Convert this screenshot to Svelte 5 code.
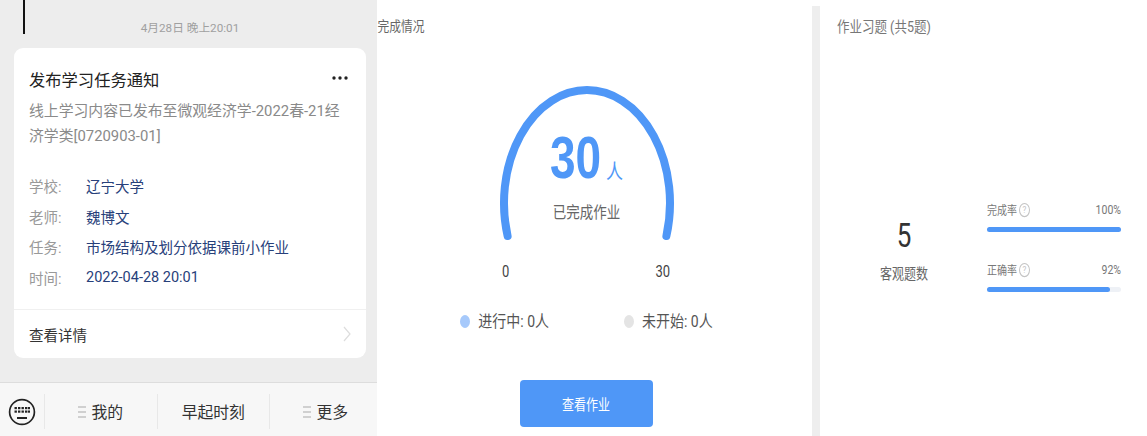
<script>
    const rows = [
        { label: "学校:", value: "辽宁大学" },
        { label: "老师:", value: "魏博文" },
        { label: "任务:", value: "市场结构及划分依据课前小作业" },
        { label: "时间:", value: "2022-04-28 20:01" }
    ];
    const menus = [
        { name: "我的", lines: true },
        { name: "早起时刻", lines: false },
        { name: "更多", lines: true }
    ];
    const rates = [
        { name: "完成率", text: "100%", pct: 100 },
        { name: "正确率", text: "92%", pct: 92 }
    ];
</script>

<div class="page">
    <section class="chat">
        <div class="cursor"></div>
        <div class="date">4月28日 晚上20:01</div>
        <div class="card">
            <div class="card-top">
                <div class="card-head">
                    <h2>发布学习任务通知</h2>
                    <svg class="more" width="18" height="6" viewBox="0 0 18 6">
                        <circle cx="3" cy="3" r="1.7" fill="#222" />
                        <circle cx="9" cy="3" r="1.7" fill="#222" />
                        <circle cx="15" cy="3" r="1.7" fill="#222" />
                    </svg>
                </div>
                <p class="desc">线上学习内容已发布至微观经济学-2022春-21经济学类[0720903-01]</p>
                <div class="rows">
                    {#each rows as row}
                        <div class="row">
                            <span class="label">{row.label}</span>
                            <span class="value">{row.value}</span>
                        </div>
                    {/each}
                </div>
            </div>
            <div class="detail">
                <span>查看详情</span>
                <svg width="8" height="16" viewBox="0 0 8 16">
                    <path d="M1 1l6 7-6 7" fill="none" stroke="#ddd" stroke-width="1.2" />
                </svg>
            </div>
        </div>
        <div class="menu">
            <div class="kb">
                <svg width="28" height="28" viewBox="0 0 28 28">
                    <circle cx="14" cy="14" r="12.4" fill="none" stroke="#222" stroke-width="1.7" />
                    <g fill="#222">
                        <rect x="6.5" y="9" width="2.4" height="2.2" />
                        <rect x="10" y="9" width="2.4" height="2.2" />
                        <rect x="13.5" y="9" width="2.4" height="2.2" />
                        <rect x="17" y="9" width="2.4" height="2.2" />
                        <rect x="20" y="9" width="2" height="2.2" />
                        <rect x="6.5" y="12.5" width="2.4" height="2.2" />
                        <rect x="10" y="12.5" width="2.4" height="2.2" />
                        <rect x="13.5" y="12.5" width="2.4" height="2.2" />
                        <rect x="17" y="12.5" width="2.4" height="2.2" />
                        <rect x="20" y="12.5" width="2" height="2.2" />
                        <rect x="9" y="19" width="10" height="2" />
                    </g>
                </svg>
            </div>
            {#each menus as m}
                <div class="menu-item">
                    {#if m.lines}<i class="lines"></i>{/if}
                    <span>{m.name}</span>
                </div>
            {/each}
        </div>
    </section>

    <section class="status">
        <h3 class="stitle">完成情况</h3>
        <div class="gauge">
            <svg class="arc" width="180" height="160" viewBox="0 0 180 160">
                <path d="M10.600 154 A83 113 0 1 1 169.400 154" fill="none" stroke="#4f97f7" stroke-width="8" stroke-linecap="round" />
            </svg>
            <div class="num"><b>30</b><span>人</span></div>
            <div class="done">已完成作业</div>
        </div>
        <div class="ends"><span>0</span><span>30</span></div>
        <div class="legend">
            <div class="leg"><i class="dot blue"></i><span>进行中: 0人</span></div>
            <div class="leg"><i class="dot grey"></i><span>未开始: 0人</span></div>
        </div>
        <button class="view"><span>查看作业</span></button>
    </section>

    <div class="strip"></div>

    <section class="exercise">
        <h3 class="etitle">作业习题 (共5题)</h3>
        <div class="stats">
            <div class="count">
                <div class="five">5</div>
                <div class="cap">客观题数</div>
            </div>
            <div class="rates">
                {#each rates as r}
                    <div class="rate">
                        <div class="rate-top">
                            <span class="rname">{r.name}<i class="q">?</i></span>
                            <span class="rval">{r.text}</span>
                        </div>
                        <div class="track"><div class="fill" style="width:{r.pct}%"></div></div>
                    </div>
                {/each}
            </div>
        </div>
    </section>
</div>

<style>
    :global(body) {
        margin: 0;
        background: #fff;
    }
    .page {
        display: flex;
        width: 1147px;
        height: 436px;
        overflow: hidden;
        font-family: Roboto, "Noto Sans CJK SC", sans-serif;
    }
    h2, h3, p {
        margin: 0;
        font-weight: 400;
    }

    /* left: chat card */
    .chat {
        position: relative;
        width: 377px;
        flex: none;
        background: #ededed;
        display: flex;
        flex-direction: column;
    }
    .cursor {
        position: absolute;
        left: 23px;
        top: 0;
        width: 2px;
        height: 34px;
        background: #111;
    }
    .date {
        height: 48px;
        padding-top: 19px;
        padding-left: 3px;
        box-sizing: border-box;
        text-align: center;
        font-size: 11.700px;
        line-height: 18px;
        color: #a0a0a0;
    }
    .card {
        margin: 0 11px 0 14px;
        height: 310px;
        background: #fff;
        border-radius: 9px;
        display: flex;
        flex-direction: column;
    }
    .card-top {
        flex: 1;
        padding: 19px 15px 0;
    }
    .card-head {
        display: flex;
        justify-content: space-between;
        align-items: center;
        height: 24px;
    }
    .card-head h2 {
        font-size: 16.300px;
        color: #222;
    }
    .more {
        margin-right: 2px;
        margin-top: -2px;
    }
    .desc {
        margin-top: 8px;
        font-size: 14.850px;
        line-height: 24.500px;
        color: #8a8a8a;
    }
    .rows {
        margin-top: 22px;
    }
    .row {
        display: flex;
        height: 30.700px;
        align-items: center;
        font-size: 14.500px;
    }
    .label {
        width: 57px;
        color: #999;
    }
    .value {
        color: #27407a;
    }
    .detail {
        height: 48px;
        border-top: 1px solid #f0f0f0;
        padding: 0 15px;
        display: flex;
        justify-content: space-between;
        align-items: center;
        font-size: 14.500px;
        color: #333;
    }
    .menu {
        margin-top: auto;
        height: 54px;
        background: #f7f7f7;
        border-top: 1px solid #ddd;
        box-sizing: border-box;
        display: flex;
        align-items: center;
        padding-top: 4px;
    }
    .kb {
        width: 44px;
        flex: none;
        display: flex;
        padding-left: 8px;
        box-sizing: border-box;
    }
    .menu-item {
        width: 112.500px;
        height: 35px;
        flex: none;
        border-left: 1px solid #e8e8e8;
        box-sizing: border-box;
        display: flex;
        align-items: center;
        justify-content: center;
        gap: 5px;
        font-size: 15.800px;
        color: #333;
    }
    .lines {
        width: 8px;
        height: 8px;
        border-top: 2px solid #d0d0d0;
        border-bottom: 2px solid #d0d0d0;
        position: relative;
    }
    .lines::after {
        content: "";
        position: absolute;
        left: 0;
        right: 0;
        top: 3px;
        height: 2px;
        background: #d0d0d0;
    }

    /* middle: completion */
    .status {
        width: 435px;
        flex: none;
        box-sizing: border-box;
        padding-right: 17px;
        display: flex;
        flex-direction: column;
        align-items: center;
    }
    .stitle {
        align-self: flex-start;
        margin-top: 18px;
        font-size: 12px;
        line-height: 18px;
        color: #666;
        transform: scale(0.98, 1.1);
    }
    .gauge {
        position: relative;
        width: 180px;
        height: 160px;
        margin-top: 46px;
        margin-left: 1px;
        display: flex;
        flex-direction: column;
        align-items: center;
    }
    .arc {
        position: absolute;
        left: 0;
        top: 0;
    }
    .num {
        display: flex;
        align-items: flex-end;
        margin-top: 50px;
        color: #4f97f7;
    }
    .num b {
        font-family: "Liberation Sans", sans-serif;
        font-size: 46px;
        line-height: 50px;
        transform: scaleY(1.3);
    }
    .num span {
        font-size: 17px;
        line-height: 20px;
        margin-left: 5px;
        transform: scaleY(1.2);
    }
    .done {
        margin-top: 20px;
        font-size: 13.500px;
        line-height: 20px;
        color: #666;
        transform: scaleY(1.2);
    }
    .ends {
        width: 168px;
        margin-top: 20px;
        display: flex;
        justify-content: space-between;
        font-size: 13px;
        line-height: 20px;
        color: #444;
        transform: scaleY(1.2);
    }
    .legend {
        display: flex;
        gap: 75px;
        margin-top: 29px;
        margin-left: 1px;
        font-size: 14px;
        line-height: 20px;
        color: #555;
    }
    .leg {
        display: flex;
        align-items: center;
        gap: 8px;
    }
    .leg span {
        transform: scaleY(1.15);
    }
    .dot {
        width: 10px;
        height: 13px;
        border-radius: 50%;
    }
    .blue {
        background: #a6c9fb;
    }
    .grey {
        background: #e4e4e4;
    }
    .view {
        width: 133px;
        height: 47px;
        margin-top: 49px;
        border: none;
        border-radius: 4px;
        background: #4f97f7;
        color: #fff;
        font-family: inherit;
        font-size: 12px;
        padding: 0;
    }
    .view span {
        display: inline-block;
        transform: scaleY(1.2);
    }

    .strip {
        width: 8px;
        flex: none;
        margin-top: 6px;
        background: #eeeeee;
    }

    /* right: exercises */
    .exercise {
        flex: 1;
        padding-left: 17px;
        padding-right: 26px;
    }
    .etitle {
        margin-top: 17px;
        font-size: 12.500px;
        line-height: 20px;
        color: #777;
        transform: scaleY(1.15);
        transform-origin: left center;
    }
    .stats {
        display: flex;
        margin-top: 163px;
    }
    .count {
        width: 134px;
        flex: none;
        text-align: center;
        padding-top: 20px;
    }
    .five {
        font-size: 26px;
        line-height: 30px;
        color: #333;
        transform: scaleY(1.3);
    }
    .cap {
        margin-top: 14px;
        font-size: 12px;
        line-height: 20px;
        color: #666;
        transform: scaleY(1.2);
    }
    .rates {
        flex: 1;
        min-width: 0;
        margin-left: 16px;
    }
    .rate {
        height: 60px;
    }
    .rate-top {
        display: flex;
        justify-content: space-between;
        align-items: center;
        height: 18px;
        font-size: 10.500px;
        color: #777;
    }
    .rname {
        display: flex;
        align-items: center;
        gap: 2px;
        font-size: 10px;
        transform: scaleY(1.2);
    }
    .rval {
        transform: scaleY(1.2);
    }
    .q {
        width: 9px;
        height: 10px;
        border: 1px solid #c4c4c4;
        border-radius: 50%;
        font-style: normal;
        font-size: 8px;
        line-height: 10px;
        text-align: center;
        color: #c4c4c4;
    }
    .track {
        margin-top: 9px;
        height: 5px;
        border-radius: 3px;
        background: #eef1f6;
    }
    .fill {
        height: 100%;
        border-radius: 3px;
        background: #4f97f7;
    }
</style>
